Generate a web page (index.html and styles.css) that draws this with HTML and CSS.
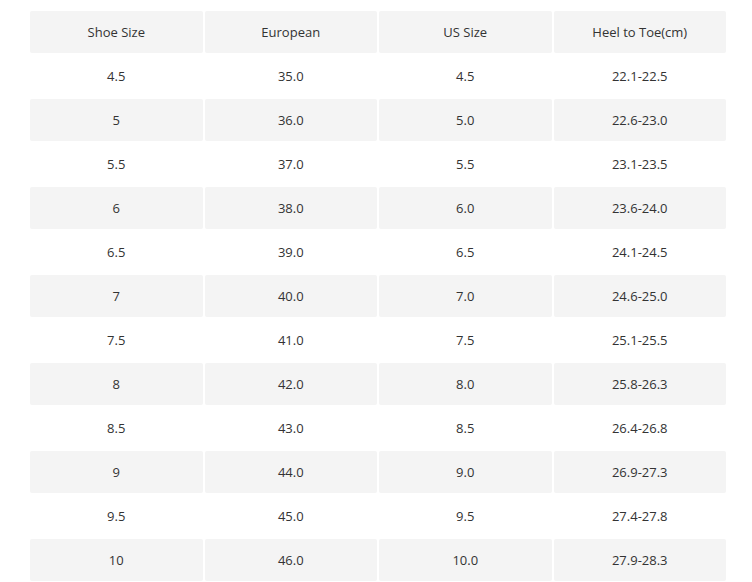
FILE: index.html
```html
<!DOCTYPE html>
<html>
<head>
<meta charset="utf-8">
<link rel="stylesheet" href="styles.css">
</head>
<body>
<table class="size-table">
  <thead>
    <tr><th>Shoe Size</th><th>European</th><th>US Size</th><th>Heel to Toe(cm)</th></tr>
  </thead>
  <tbody>
    <tr><td>4.5</td><td>35.0</td><td>4.5</td><td>22.1-22.5</td></tr>
    <tr><td>5</td><td>36.0</td><td>5.0</td><td>22.6-23.0</td></tr>
    <tr><td>5.5</td><td>37.0</td><td>5.5</td><td>23.1-23.5</td></tr>
    <tr><td>6</td><td>38.0</td><td>6.0</td><td>23.6-24.0</td></tr>
    <tr><td>6.5</td><td>39.0</td><td>6.5</td><td>24.1-24.5</td></tr>
    <tr><td>7</td><td>40.0</td><td>7.0</td><td>24.6-25.0</td></tr>
    <tr><td>7.5</td><td>41.0</td><td>7.5</td><td>25.1-25.5</td></tr>
    <tr><td>8</td><td>42.0</td><td>8.0</td><td>25.8-26.3</td></tr>
    <tr><td>8.5</td><td>43.0</td><td>8.5</td><td>26.4-26.8</td></tr>
    <tr><td>9</td><td>44.0</td><td>9.0</td><td>26.9-27.3</td></tr>
    <tr><td>9.5</td><td>45.0</td><td>9.5</td><td>27.4-27.8</td></tr>
    <tr><td>10</td><td>46.0</td><td>10.0</td><td>27.9-28.3</td></tr>
  </tbody>
</table>
</body>
</html>
```
FILE: styles.css
```css
html, body {
  margin: 0;
  padding: 0;
  background: #ffffff;
}
body {
  padding: 9px 0 0 28px;
  font-family: "Open Sans", "Noto Sans", sans-serif;
  font-size: 13px;
  color: #333333;
}
.size-table {
  border-collapse: separate;
  border-spacing: 2px;
  width: 700px;
  table-layout: fixed;
}
.size-table th,
.size-table td {
  height: 42px;
  padding: 0;
  text-align: center;
  vertical-align: middle;
  font-weight: normal;
  border-radius: 2px;
}
.size-table thead th {
  background: #f4f4f4;
}
.size-table tbody tr:nth-child(even) td {
  background: #f4f4f4;
}
```
